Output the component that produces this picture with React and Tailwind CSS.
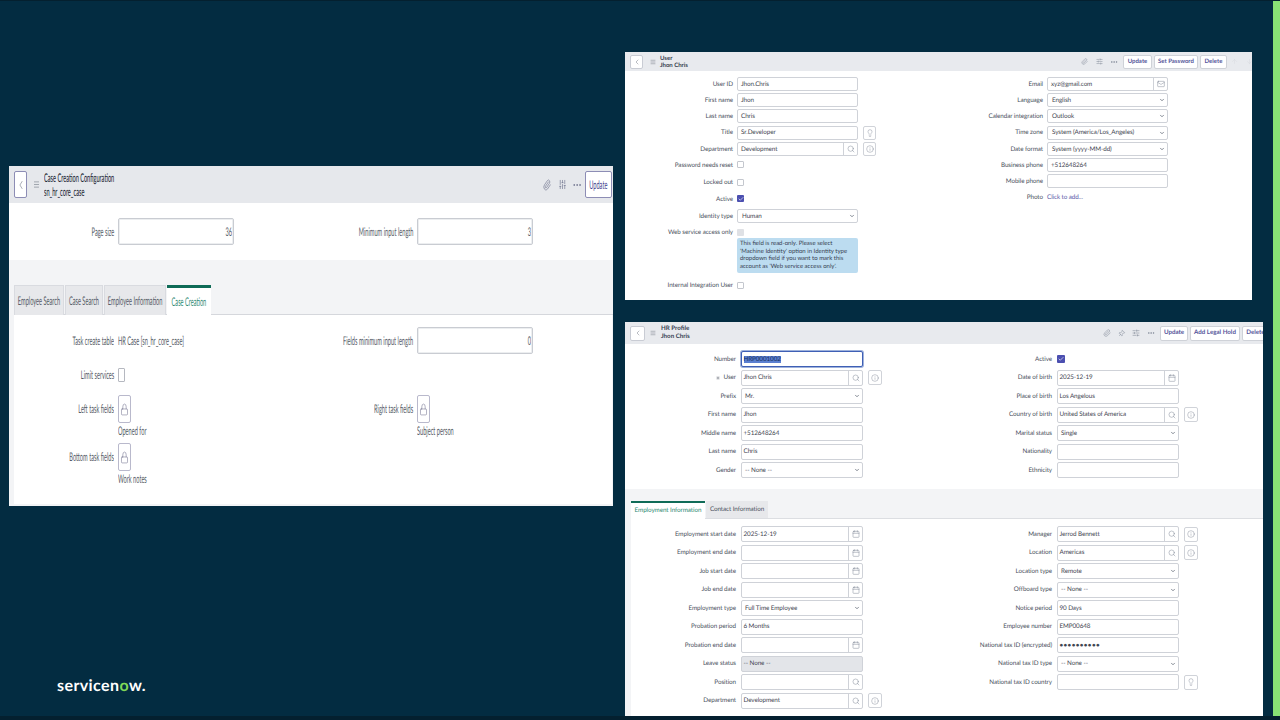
import { ArrowDown, ArrowUp, Asterisk, Calendar, Check, ChevronDown, ChevronLeft, Ellipsis, Info, Lightbulb, Lock, Mail, Menu, Paperclip, Pin, Search, SlidersHorizontal } from 'lucide-react'

// Wide panel (left) is a squashed video frame, so its text gets a horizontal squeeze
function Squeezed({ children, className = 'origin-left' }) {
  return <span className={`inline-block scale-x-[0.47] whitespace-nowrap ${className}`}>{children}</span>
}

function WideField({ label, value, labelW }) {
  return (
    <div className="flex items-center gap-[4px]">
      <div className={`flex justify-end text-[12px] text-[#555b66] ${labelW}`}>
        <Squeezed className="origin-right">{label}</Squeezed>
      </div>
      <div className="flex h-[27px] w-[116px] items-center justify-end rounded-[2px] border border-[#c9ccd2] bg-white pr-[1px] text-[12px] text-[#555b66] shadow-[inset_0_0_0_1px_#eceef0]">
        <Squeezed className="origin-right">{value}</Squeezed>
      </div>
    </div>
  )
}

function LockField({ label, value, labelW }) {
  return (
    <div className="flex gap-[4px]">
      <div className={`flex h-[28px] items-center justify-end text-[12px] text-[#555b66] ${labelW}`}>
        <Squeezed className="origin-right">{label}</Squeezed>
      </div>
      <div>
        <div className="flex h-[28px] w-[13px] items-center justify-center rounded-[2px] border border-[#b9b9cc] bg-white">
          <Lock size={13} strokeWidth={1.2} className="shrink-0 scale-x-[0.62] text-[#6b6b8a]" />
        </div>
        <div className="mt-[1px] h-[14px] text-[12px] leading-[14px] text-[#555b66]">
          <Squeezed>{value}</Squeezed>
        </div>
      </div>
    </div>
  )
}

function WidePanel() {
  const tabs = [
    ['Employee Search', 'w-[50px]'],
    ['Case Search', 'w-[38px]'],
    ['Employee Information', 'w-[62px]'],
  ]
  return (
    <section className="absolute left-[9px] top-[166px] flex h-[340px] w-[604px] flex-col bg-[#f3f4f6]">
      <header className="flex h-[37px] shrink-0 items-center bg-[#e6e8ec] pl-[5px] pr-[1px]">
        <div className="flex h-[27px] w-[13px] items-center justify-center rounded-[2px] border border-[#8d8db5] bg-white">
          <ChevronLeft size={14} strokeWidth={1.2} className="shrink-0 scale-x-[0.62] text-[#6b7280]" />
        </div>
        <Menu size={9} strokeWidth={1.4} className="ml-[5px] scale-x-[0.7] text-[#4b5563]" />
        <div className="ml-[3px] text-[12px] font-medium leading-[14px] text-[#1f2937]">
          <div><Squeezed>Case Creation Configuration</Squeezed></div>
          <div><Squeezed>sn_hr_core_case</Squeezed></div>
        </div>
        <div className="ml-auto flex items-center text-[#6b6f8a]">
          <Paperclip size={12} strokeWidth={1.4} className="scale-x-[0.7]" />
          <SlidersHorizontal size={11} strokeWidth={1.6} className="ml-[4px] rotate-90 scale-y-[0.7]" />
          <Ellipsis size={10} strokeWidth={2} className="ml-[4px]" />
          <div className="ml-[3px] flex h-[27px] w-[27px] items-center justify-center rounded-[2px] border border-[#8d8db5] bg-white text-[12px] text-[#3f3f8f]">
            <Squeezed className="origin-center">Update</Squeezed>
          </div>
        </div>
      </header>

      <div className="flex h-[57px] shrink-0 items-center bg-white">
        <div className="w-[299px]"><WideField label="Page size" value="36" labelW="w-[105px]" /></div>
        <WideField label="Minimum input length" value="3" labelW="w-[105px]" />
      </div>

      <div className="ml-[5px] mt-[25px] flex h-[30px] shrink-0 border-b border-[#d5d7dc] text-[12px]">
        {tabs.map(([name, w]) => (
          <div key={name} className={`mr-[1px] flex h-[30px] items-center justify-center border-x border-t border-[#d9dbe0] bg-[#e7e8eb] text-[#555b66] ${w}`}>
            <Squeezed className="origin-center">{name}</Squeezed>
          </div>
        ))}
        <div className="flex h-[30px] w-[44px] items-center justify-center border-t-[3px] border-[#0f6b57] bg-white text-[#2f8a74]">
          <Squeezed className="origin-center">Case Creation</Squeezed>
        </div>
      </div>

      <div className="ml-[5px] mr-[1px] mb-[2px] flex flex-1 bg-white pt-[12px]">
        <div className="flex w-[294px] flex-col">
          <div className="flex h-[27px] items-center gap-[4px] text-[12px] text-[#555b66]">
            <div className="flex w-[100px] justify-end"><Squeezed className="origin-right">Task create table</Squeezed></div>
            <div className="w-[100px]"><Squeezed>HR Case [sn_hr_core_case]</Squeezed></div>
          </div>
          <div className="mt-[14px] flex h-[14px] items-center gap-[4px] text-[12px] text-[#555b66]">
            <div className="flex w-[100px] justify-end"><Squeezed className="origin-right">Limit services</Squeezed></div>
            <div className="h-[14px] w-[7px] rounded-[1px] border border-[#b5b8c0] bg-white" />
          </div>
          <div className="mt-[13px]"><LockField label="Left task fields" value="Opened for" labelW="w-[100px]" /></div>
          <div className="mt-[5px]"><LockField label="Bottom task fields" value="Work notes" labelW="w-[100px]" /></div>
        </div>
        <div className="flex flex-col">
          <WideField label="Fields minimum input length" value="0" labelW="w-[105px]" />
          <div className="mt-[41px]"><LockField label="Right task fields" value="Subject person" labelW="w-[105px]" /></div>
        </div>
      </div>
    </section>
  )
}

function IconBtn({ icon: Icon, size }) {
  return (
    <div className={`flex shrink-0 items-center justify-center rounded-[2px] border border-[#d0d3d9] bg-white text-[#7c8494] ${size}`}>
      <Icon size={8} strokeWidth={1.3} />
    </div>
  )
}

// h / box sizes differ a little between the two right hand panels
function Field({ label, value, kind, addon, after, labelW, inputW, big, disabled, required, focus, password }) {
  const h = big ? 'h-[16px]' : 'h-[14px]'
  let inset = 'px-[3px]'
  if (big && kind !== 'select') inset = 'px-[1.5px]'
  if (!big && kind === 'select') inset = 'px-[4px]'
  return (
    <div className={`flex items-center text-[6.3px] tracking-[-0.08px] ${h} ${big ? 'gap-[5px]' : 'gap-[4px]'}`}>
      <div className={`flex shrink-0 items-center justify-end gap-[2px] whitespace-nowrap pt-[1px] text-[#4b5160] ${labelW}`}>
        {required && <Asterisk size={6} strokeWidth={1.4} />}
        {label}
      </div>
      <div className={`flex h-full items-center overflow-hidden rounded-[2px] border ${focus ? 'border-[#3f5fb5] ring-1 ring-[#9fb2dc]' : 'border-[#cfd2d8]'} ${disabled ? 'bg-[#e3e5e9]' : 'bg-white'} text-[#3f4652] ${inputW}`}>
        <div className={`min-w-0 flex-1 truncate pt-[1px] ${inset}`}>
          {focus ? <span className="bg-[#5b7fd0] text-[#17305f]">{value}</span> : password ? <span className="font-bold tracking-[0.4px]">{value}</span> : value}
        </div>
        {kind === 'select' && <ChevronDown size={6} strokeWidth={2.4} className="mr-[2px] shrink-0 text-[#374151]" />}
        {addon && (
          <div className="flex h-full w-[14px] shrink-0 items-center justify-center border-l border-[#cfd2d8] text-[#7c8494]">
            {addon === 'search' && <Search size={8} strokeWidth={1.4} />}
            {addon === 'date' && <Calendar size={8} strokeWidth={1.4} />}
            {addon === 'mail' && <Mail size={8} strokeWidth={1.4} />}
          </div>
        )}
      </div>
      {after === 'info' && <IconBtn icon={Info} size={big ? 'h-[15px] w-[14px]' : 'ml-[1px] h-[14px] w-[13px]'} />}
      {after === 'bulb' && <IconBtn icon={Lightbulb} size={big ? 'h-[15px] w-[14px]' : 'ml-[1px] h-[14px] w-[13px]'} />}
    </div>
  )
}

function CheckRow({ label, labelW, state, big }) {
  return (
    <div className={`flex items-center text-[6.3px] tracking-[-0.08px] ${big ? 'h-[16px] gap-[5px]' : 'h-[14px] gap-[4px]'}`}>
      <div className={`whitespace-nowrap pt-[1px] text-right text-[#4b5160] ${labelW}`}>{label}</div>
      {state === 'on' && (
        <div className={`flex items-center justify-center rounded-[1px] bg-[#4b4fb0] text-white ${big ? 'h-[8px] w-[8px]' : 'h-[7px] w-[7px]'}`}>
          <Check size={6} strokeWidth={2.5} />
        </div>
      )}
      {state === 'off' && <div className="h-[7px] w-[7px] rounded-[1px] border border-[#c4c7ce] bg-white" />}
      {state === 'disabled' && <div className="h-[7px] w-[7px] rounded-[1px] bg-[#dfe1e5]" />}
    </div>
  )
}

function Action({ children, className }) {
  return (
    <div className={`flex shrink-0 items-center justify-center rounded-[2px] border border-[#cfd2d8] bg-white font-bold text-[#55559a] ${className}`}>
      {children}
    </div>
  )
}

function Title({ back, first, second, big }) {
  return (
    <div className="flex items-center">
      <div className={`flex items-center justify-center rounded-[2px] border border-[#c9ccd4] bg-white ${back}`}>
        <ChevronLeft size={8} strokeWidth={1.4} className="text-[#6b7280]" />
      </div>
      <Menu size={6} strokeWidth={1.8} className={big ? 'ml-[5px] text-[#6b7280]' : 'ml-[7px] text-[#6b7280]'} />
      <div className={`font-bold text-[#374151] ${big ? 'ml-[5px] text-[6.2px] leading-[8px]' : 'ml-[4px] text-[6px] leading-[7px]'}`}>
        <div>{first}</div>
        <div>{second}</div>
      </div>
    </div>
  )
}

function UserPanel() {
  const l = { labelW: 'w-[108px]', inputW: 'w-[121px]' }
  const r = { labelW: 'w-[105px]', inputW: 'w-[121px]' }
  return (
    <section className="absolute left-[625px] top-[52px] h-[248px] w-[627px] bg-white">
      <header className="flex h-[19px] items-center bg-[#e8eaee] pl-[5px]">
        <Title back="h-[14px] w-[13px]" first="User" second="Jhon Chris" />
        <div className="ml-auto flex items-center text-[6px] text-[#7c8494]">
          <Paperclip size={7} strokeWidth={1.4} />
          <SlidersHorizontal size={7} strokeWidth={1.6} className="ml-[8px]" />
          <Ellipsis size={8} strokeWidth={2} className="ml-[7px]" />
          <Action className="ml-[5px] h-[14px] w-[29px]">Update</Action>
          <Action className="ml-[2px] h-[14px] w-[44px]">Set Password</Action>
          <Action className="ml-[2px] h-[14px] w-[27px]">Delete</Action>
          <ArrowUp size={7} strokeWidth={1.4} className="ml-[4px] text-[#d5d7dc]" />
          <ArrowDown size={7} strokeWidth={1.4} className="ml-[8px] mr-[-1px] text-[#d5d7dc]" />
        </div>
      </header>
      <div className="flex pt-[6px]">
        <div className="flex w-[313px] flex-col gap-[2.2px]">
          <Field {...l} label="User ID" value="Jhon.Chris" />
          <Field {...l} label="First name" value="Jhon" />
          <Field {...l} label="Last name" value="Chris" />
          <Field {...l} label="Title" value="Sr.Developer" after="bulb" />
          <Field {...l} label="Department" value="Development" addon="search" after="info" />
          <CheckRow labelW="w-[108px]" label="Password needs reset" state="off" />
          <div className="mt-[1px]"><CheckRow labelW="w-[108px]" label="Locked out" state="off" /></div>
          <div className="mt-[0.5px]"><CheckRow labelW="w-[108px]" label="Active" state="on" /></div>
          <div className="mt-[1px]"><Field {...l} label="Identity type" value="Human" kind="select" /></div>
          <CheckRow labelW="w-[108px]" label="Web service access only" state="disabled" />
          <div className="ml-[112px] mt-[-3px] h-[35px] w-[121px] rounded-[2px] bg-[#bcdcf0] px-[3px] py-[2px] text-[6px] leading-[7.5px] text-[#374151]">
            This field is read-only. Please select 'Machine Identity' option in Identity type dropdown field if you want to mark this account as 'Web service access only'.
          </div>
          <div className="mt-[3px]"><CheckRow labelW="w-[108px]" label="Internal Integration User" state="off" /></div>
        </div>
        <div className="flex flex-col gap-[2.2px]">
          <Field {...r} label="Email" value="xyz@gmail.com" addon="mail" />
          <Field {...r} label="Language" value="English" kind="select" />
          <Field {...r} label="Calendar integration" value="Outlook" kind="select" />
          <Field {...r} label="Time zone" value="System (America/Los_Angeles)" kind="select" />
          <Field {...r} label="Date format" value="System (yyyy-MM-dd)" kind="select" />
          <Field {...r} label="Business phone" value="+512648264" />
          <Field {...r} label="Mobile phone" value="" />
          <div className="flex h-[14px] items-center gap-[4px] text-[6.3px] tracking-[-0.08px]">
            <div className="w-[105px] text-right text-[#4b5160]">Photo</div>
            <div className="text-[#5a5aa8]">Click to add...</div>
          </div>
        </div>
      </div>
    </section>
  )
}

function ProfilePanel() {
  const l = { big: true, labelW: 'w-[111px]', inputW: 'w-[122px]' }
  const r = { big: true, labelW: 'w-[111px]', inputW: 'w-[122px]' }
  return (
    <section className="absolute left-[625px] top-[322px] flex h-[394px] w-[638px] flex-col overflow-hidden bg-[#f3f4f6]">
      <header className="flex h-[22px] shrink-0 items-center bg-[#e8eaee] pl-[5px]">
        <Title big back="h-[15px] w-[15px]" first="HR Profile" second="Jhon Chris" />
        <div className="ml-auto flex items-center text-[6.2px] text-[#7c8494]">
          <Paperclip size={8} strokeWidth={1.4} />
          <Pin size={7} strokeWidth={1.6} className="ml-[7px] rotate-45" />
          <SlidersHorizontal size={8} strokeWidth={1.6} className="ml-[7px]" />
          <Ellipsis size={8} strokeWidth={2} className="ml-[7px]" />
          <Action className="ml-[5px] h-[15px] w-[28px]">Update</Action>
          <Action className="ml-[2px] h-[15px] w-[50px]">Add Legal Hold</Action>
          <Action className="ml-[2px] mr-[-6px] h-[15px] w-[27px]">Delete</Action>
        </div>
      </header>
      <div className="flex h-[145px] shrink-0 bg-white pt-[7px]">
        <div className="flex w-[316px] flex-col gap-[2.5px]">
          <Field {...l} label="Number" value="HRP0001002" focus />
          <Field {...l} label="User" value="Jhon Chris" addon="search" after="info" required />
          <Field {...l} label="Prefix" value="Mr." kind="select" />
          <Field {...l} label="First name" value="Jhon" />
          <Field {...l} label="Middle name" value="+512648264" />
          <Field {...l} label="Last name" value="Chris" />
          <Field {...l} label="Gender" value="-- None --" kind="select" />
        </div>
        <div className="flex flex-col gap-[2.5px]">
          <CheckRow big labelW="w-[111px]" label="Active" state="on" />
          <Field {...r} label="Date of birth" value="2025-12-19" addon="date" />
          <Field {...r} label="Place of birth" value="Los Angelous" />
          <Field {...r} label="Country of birth" value="United States of America" addon="search" after="info" />
          <Field {...r} label="Marital status" value="Single" kind="select" />
          <Field {...r} label="Nationality" value="" />
          <Field {...r} label="Ethnicity" value="" />
        </div>
      </div>
      <div className="ml-[6px] mt-[12px] flex h-[18px] shrink-0 border-b border-[#dcdee2] text-[6.3px] tracking-[-0.08px]">
        <div className="flex h-[18px] w-[74px] items-center justify-center whitespace-nowrap border-t-2 border-[#0f6b57] bg-white text-[#2f8a74]">Employment Information</div>
        <div className="ml-[1px] flex h-[17px] w-[62px] items-center justify-center whitespace-nowrap bg-[#e7e8eb] text-[#4b5160]">Contact Information</div>
      </div>
      <div className="ml-[6px] flex flex-1 bg-white pt-[7px]">
        <div className="flex w-[310px] flex-col gap-[2.5px]">
          <Field {...l} labelW="w-[105px]" label="Employment start date" value="2025-12-19" addon="date" />
          <Field {...l} labelW="w-[105px]" label="Employment end date" value="" addon="date" />
          <Field {...l} labelW="w-[105px]" label="Job start date" value="" addon="date" />
          <Field {...l} labelW="w-[105px]" label="Job end date" value="" addon="date" />
          <Field {...l} labelW="w-[105px]" label="Employment type" value="Full Time Employee" kind="select" />
          <Field {...l} labelW="w-[105px]" label="Probation period" value="6 Months" />
          <Field {...l} labelW="w-[105px]" label="Probation end date" value="" addon="date" />
          <Field {...l} labelW="w-[105px]" label="Leave status" value="-- None --" disabled />
          <Field {...l} labelW="w-[105px]" label="Position" value="" addon="search" />
          <Field {...l} labelW="w-[105px]" label="Department" value="Development" addon="search" after="info" />
        </div>
        <div className="flex flex-col gap-[2.5px]">
          <Field {...r} label="Manager" value="Jerrod Bennett" addon="search" after="info" />
          <Field {...r} label="Location" value="Americas" addon="search" after="info" />
          <Field {...r} label="Location type" value="Remote" kind="select" />
          <Field {...r} label="Offboard type" value="-- None --" kind="select" />
          <Field {...r} label="Notice period" value="90 Days" />
          <Field {...r} label="Employee number" value="EMP00648" />
          <Field {...r} label="National tax ID (encrypted)" value="••••••••••" password />
          <Field {...r} label="National tax ID type" value="-- None --" kind="select" />
          <Field {...r} label="National tax ID country" value="" after="bulb" />
        </div>
      </div>
    </section>
  )
}

export default function App() {
  return (
    <div className="relative h-[720px] w-[1280px] overflow-hidden bg-[#032c41] font-['Lato',sans-serif] [text-rendering:geometricPrecision]">
      <WidePanel />
      <UserPanel />
      <ProfilePanel />
      <div className="absolute left-[57px] top-[676px] text-[16px] font-bold leading-[20px] tracking-[0.4px] text-white">
        servicen<span className="text-[#7fd858]">o</span>w.
      </div>
      <div className="absolute bottom-0 right-0 top-0 w-[7px] bg-[#88e275]" />
      <div className="absolute bottom-0 left-0 right-0 h-[4px] bg-[#04202f]" />
      <div className="absolute left-0 right-0 top-0 h-[1px] bg-[#04202f]" />
    </div>
  )
}
